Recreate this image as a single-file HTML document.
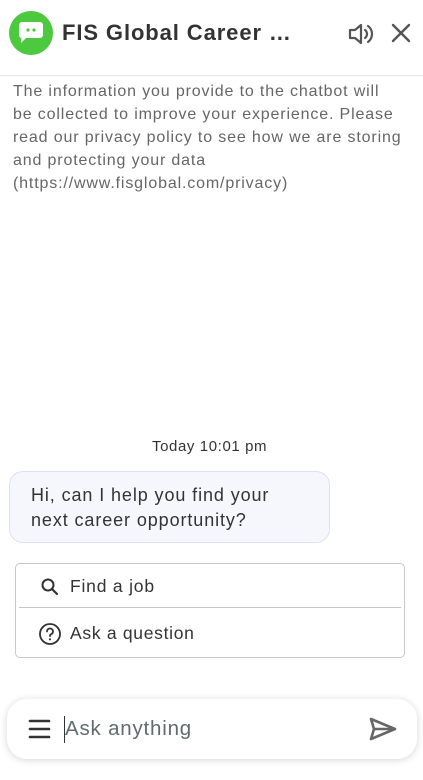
<!DOCTYPE html>
<html><head><meta charset="utf-8"><style>
*{margin:0;padding:0;box-sizing:border-box}
body{width:423px;height:780px;background:#fff;font-family:"Liberation Sans",sans-serif;position:relative;overflow:hidden;color:#333}
.a{position:absolute;white-space:nowrap}
</style></head><body>
<div class="a" style="left:9px;top:11px;width:44px;height:44px;border-radius:50%;background:#4cc93f"></div>
<svg class="a" style="left:17px;top:20px" width="28" height="26" viewBox="0 0 28 26"><path d="M5 2h18a3 3 0 0 1 3 3v10a3 3 0 0 1-3 3H9l-5 5v-5a3 3 0 0 1-2-3V5a3 3 0 0 1 3-3z" fill="#fff"/><circle cx="11" cy="10" r="1.6" fill="#4cc93f"/><circle cx="17" cy="10" r="1.6" fill="#4cc93f"/></svg>
<div class="a" style="left:62px;top:20px;font-size:22px;font-weight:bold;color:#333;letter-spacing:0.9px">FIS Global Career …</div>
<svg class="a" style="left:347px;top:21px" width="28" height="26" viewBox="0 0 28 26"><path d="M3 9h5l6-5v18l-6-5H3z" fill="none" stroke="#555" stroke-width="2.2" stroke-linejoin="round"/><path d="M18 9a5 5 0 0 1 0 8M21 5a10 10 0 0 1 0 16" fill="none" stroke="#555" stroke-width="2.2" stroke-linecap="round"/></svg>
<svg class="a" style="left:391px;top:23px" width="20" height="20" viewBox="0 0 20 20"><path d="M2 2l16 16M18 2L2 18" stroke="#555" stroke-width="2.4" stroke-linecap="round"/></svg>
<div class="a" style="left:0;top:75px;width:423px;height:1px;background:#e6e6e6"></div>
<div class="a" style="left:13px;top:80px;font-size:16px;line-height:23px;color:#666;letter-spacing:0.85px">The information you provide to the chatbot will<br>be collected to improve your experience. Please<br>read our privacy policy to see how we are storing<br>and protecting your data<br>(https://www.fisglobal.com/privacy)</div>
<div class="a" style="left:152px;top:438px;font-size:15px;color:#333;letter-spacing:0.6px">Today 10:01 pm</div>
<div class="a" style="left:9px;top:471px;width:321px;height:72px;background:#f5f7fd;border:1px solid #d8e1f6;border-radius:14px"></div>
<div class="a" style="left:31px;top:483px;font-size:18px;line-height:25px;color:#333;letter-spacing:0.9px">Hi, can I help you find your<br>next career opportunity?</div>
<div class="a" style="left:15px;top:563px;width:390px;height:95px;border:1px solid #c8c8c8;border-radius:5px"></div>
<div class="a" style="left:19px;top:607px;width:382px;height:1px;background:#c8c8c8"></div>
<svg class="a" style="left:40px;top:577px" width="20" height="20" viewBox="0 0 20 20"><circle cx="8" cy="8" r="5.5" fill="none" stroke="#333" stroke-width="2"/><path d="M12 12l5 5" stroke="#333" stroke-width="2.2" stroke-linecap="round"/></svg>
<div class="a" style="left:70px;top:576px;font-size:17.5px;color:#333;letter-spacing:0.8px">Find a job</div>
<svg class="a" style="left:38px;top:622px" width="24" height="24" viewBox="0 0 24 24"><circle cx="12" cy="12" r="10" fill="none" stroke="#333" stroke-width="1.8"/><path d="M9 9.5a3 3 0 1 1 4 2.8c-.8.4-1 1-1 1.8" fill="none" stroke="#333" stroke-width="1.8" stroke-linecap="round"/><circle cx="12" cy="17.3" r="1.1" fill="#333"/></svg>
<div class="a" style="left:70px;top:623px;font-size:17.5px;color:#333;letter-spacing:0.7px">Ask a question</div>
<div class="a" style="left:7px;top:699px;width:410px;height:60px;border-radius:20px;background:#fff;box-shadow:0 1px 8px rgba(0,0,0,0.16)"></div>
<svg class="a" style="left:28px;top:718px" width="24" height="22" viewBox="0 0 24 22"><path d="M2 3h19M2 11h19M2 19h19" stroke="#333" stroke-width="2.6" stroke-linecap="round"/></svg>
<div class="a" style="left:64px;top:716px;width:1px;height:27px;background:#333"></div>
<div class="a" style="left:65px;top:717px;font-size:20.5px;color:#606b6b;letter-spacing:0.8px">Ask anything</div>
<svg class="a" style="left:368px;top:717px" width="30" height="24" viewBox="0 0 30 24"><path d="M3 2l24 10L3 22l3-10z" fill="none" stroke="#666" stroke-width="2.6" stroke-linejoin="round"/><path d="M6 12h20" stroke="#666" stroke-width="2.4"/></svg>
</body></html>
